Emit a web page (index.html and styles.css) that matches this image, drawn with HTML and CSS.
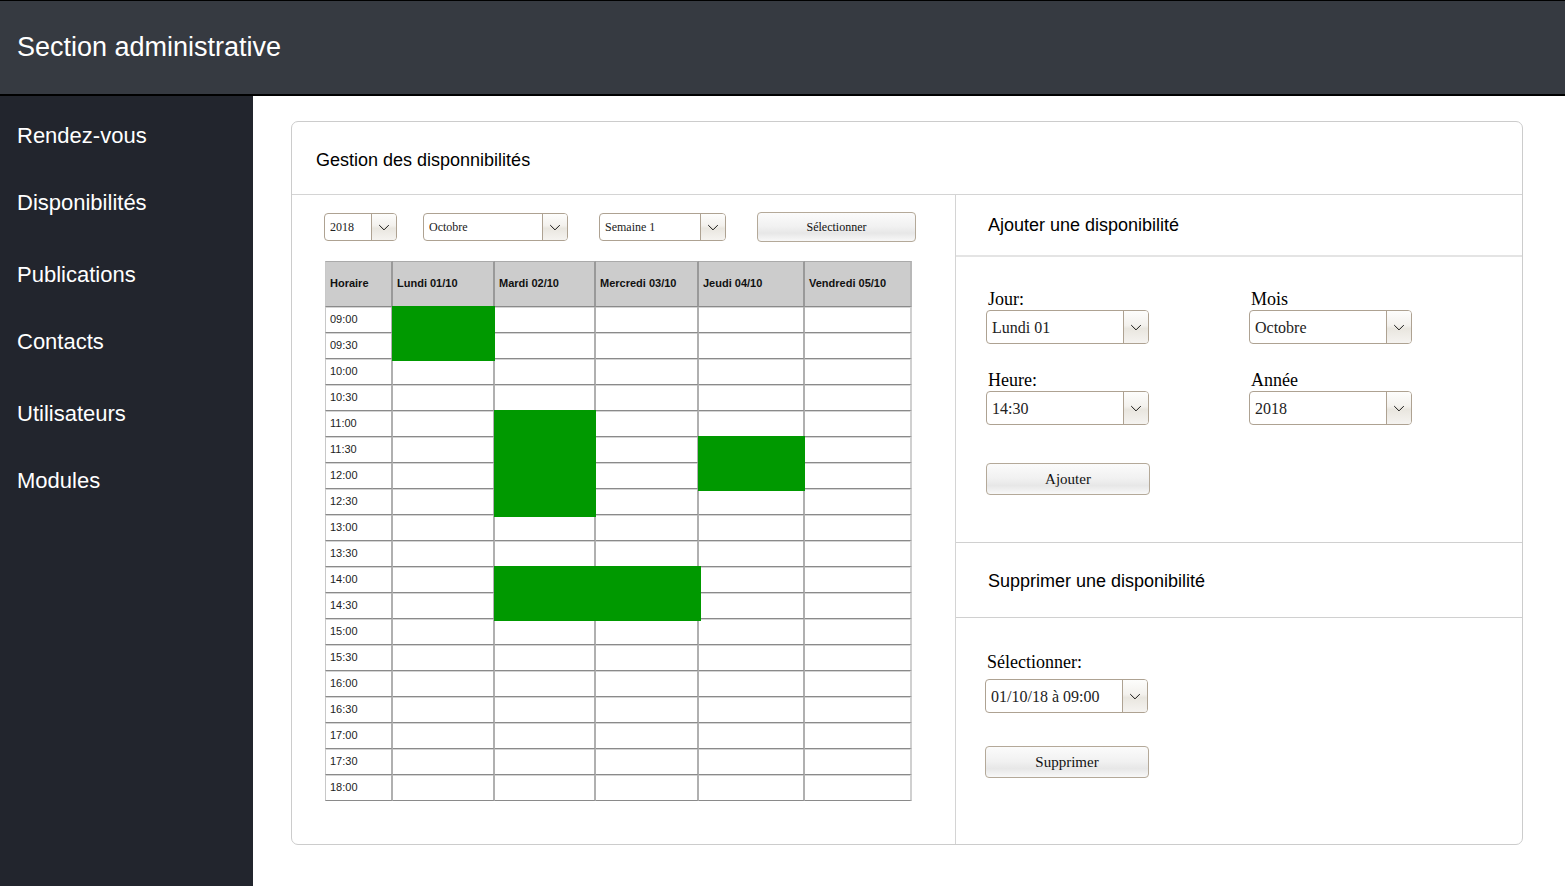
FILE: index.html
```html
<!DOCTYPE html>
<html lang="fr">
<head>
<meta charset="utf-8">
<title>Section administrative</title>
<link rel="stylesheet" href="styles.css">
</head>
<body>
<header class="topbar"><h1 class="topbar-title">Section administrative</h1></header>
<div class="shell">
  <nav class="sidebar">
    <ul class="menu">
      <li><a href="#">Rendez-vous</a></li>
      <li><a href="#">Disponibilités</a></li>
      <li><a href="#">Publications</a></li>
      <li><a href="#">Contacts</a></li>
      <li><a href="#">Utilisateurs</a></li>
      <li><a href="#">Modules</a></li>
    </ul>
  </nav>
  <main class="main">
    <section class="card">
      <h2 class="card-title">Gestion des disponnibilités</h2>
      <div class="panes">
        <div class="planner">
          <form class="toolbar">
            <span class="combo combo-year"><select aria-label="Année affichée"><option>2018</option></select><svg class="arrow" viewBox="0 0 25 26"><path d="M7.500 11l5 5 5-5"/></svg></span>
            <span class="combo combo-month"><select aria-label="Mois affiché"><option>Octobre</option></select><svg class="arrow" viewBox="0 0 25 26"><path d="M7.500 11l5 5 5-5"/></svg></span>
            <span class="combo combo-week"><select aria-label="Semaine affichée"><option>Semaine 1</option></select><svg class="arrow" viewBox="0 0 25 26"><path d="M7.500 11l5 5 5-5"/></svg></span>
            <button class="btn btn-small" type="button">Sélectionner</button>
          </form>
          <table class="schedule">
            <colgroup><col class="c-hour"><col class="c-mon"><col class="c-tue"><col class="c-wed"><col class="c-thu"><col class="c-fri"></colgroup>
            <thead>
              <tr><th scope="col">Horaire</th><th scope="col">Lundi 01/10</th><th scope="col">Mardi 02/10</th><th scope="col">Mercredi 03/10</th><th scope="col">Jeudi 04/10</th><th scope="col">Vendredi 05/10</th></tr>
            </thead>
            <tbody>
              <tr><td>09:00</td><td><span class="slot"></span></td><td></td><td></td><td></td><td></td></tr>
              <tr><td>09:30</td><td></td><td></td><td></td><td></td><td></td></tr>
              <tr><td>10:00</td><td></td><td></td><td></td><td></td><td></td></tr>
              <tr><td>10:30</td><td></td><td></td><td></td><td></td><td></td></tr>
              <tr><td>11:00</td><td></td><td><span class="slot slot-long"></span></td><td></td><td></td><td></td></tr>
              <tr><td>11:30</td><td></td><td></td><td></td><td><span class="slot"></span></td><td></td></tr>
              <tr><td>12:00</td><td></td><td></td><td></td><td></td><td></td></tr>
              <tr><td>12:30</td><td></td><td></td><td></td><td></td><td></td></tr>
              <tr><td>13:00</td><td></td><td></td><td></td><td></td><td></td></tr>
              <tr><td>13:30</td><td></td><td></td><td></td><td></td><td></td></tr>
              <tr><td>14:00</td><td></td><td><span class="slot slot-wide"></span></td><td></td><td></td><td></td></tr>
              <tr><td>14:30</td><td></td><td></td><td></td><td></td><td></td></tr>
              <tr><td>15:00</td><td></td><td></td><td></td><td></td><td></td></tr>
              <tr><td>15:30</td><td></td><td></td><td></td><td></td><td></td></tr>
              <tr><td>16:00</td><td></td><td></td><td></td><td></td><td></td></tr>
              <tr><td>16:30</td><td></td><td></td><td></td><td></td><td></td></tr>
              <tr><td>17:00</td><td></td><td></td><td></td><td></td><td></td></tr>
              <tr><td>17:30</td><td></td><td></td><td></td><td></td><td></td></tr>
              <tr><td>18:00</td><td></td><td></td><td></td><td></td><td></td></tr>
            </tbody>
          </table>
        </div>
        <div class="editor">
          <h3 class="editor-title">Ajouter une disponibilité</h3>
          <form class="form form-add">
            <div class="fields">
              <div class="field"><label for="jour">Jour:</label><span class="combo combo-large"><select id="jour"><option>Lundi 01</option></select><svg class="arrow" viewBox="0 0 25 26"><path d="M7.500 11l5 5 5-5"/></svg></span></div>
              <div class="field"><label for="mois">Mois</label><span class="combo combo-large"><select id="mois"><option>Octobre</option></select><svg class="arrow" viewBox="0 0 25 26"><path d="M7.500 11l5 5 5-5"/></svg></span></div>
              <div class="field"><label for="heure">Heure:</label><span class="combo combo-large"><select id="heure"><option>14:30</option></select><svg class="arrow" viewBox="0 0 25 26"><path d="M7.500 11l5 5 5-5"/></svg></span></div>
              <div class="field"><label for="annee">Année</label><span class="combo combo-large"><select id="annee"><option>2018</option></select><svg class="arrow" viewBox="0 0 25 26"><path d="M7.500 11l5 5 5-5"/></svg></span></div>
            </div>
            <button class="btn btn-large" type="button">Ajouter</button>
          </form>
          <h3 class="editor-title editor-title-remove">Supprimer une disponibilité</h3>
          <form class="form form-remove">
            <div class="field"><label for="creneau">Sélectionner:</label><span class="combo combo-large"><select id="creneau"><option>01/10/18 à 09:00</option></select><svg class="arrow" viewBox="0 0 25 26"><path d="M7.500 11l5 5 5-5"/></svg></span></div>
            <button class="btn btn-large" type="button">Supprimer</button>
          </form>
        </div>
      </div>
    </section>
  </main>
</div>
</body>
</html>
```
FILE: styles.css
```css
* { box-sizing: border-box; }

body {
  margin: 0;
  min-height: 100vh;
  display: flex;
  flex-direction: column;
  background: #fff;
  color: #000;
  font-family: "Liberation Sans", Arial, sans-serif;
}

h1, h2, h3 { margin: 0; font-weight: 400; }

.topbar {
  padding: 29px 17px 30px;
  border-top: 1px solid #000;
  border-bottom: 2px solid #000;
  background: #363a41;
}
.topbar-title { color: #fff; font-size: 27px; line-height: 34px; }

.shell { flex: 1; display: flex; }

.sidebar { flex: 0 0 253px; background: #22252d; }
.menu { margin: 0; padding: 28px 17px 0; list-style: none; }
.menu li { height: 67px; }
.menu li:nth-child(even) { height: 72px; }
.menu a { color: #fff; font-size: 22px; line-height: 24px; text-decoration: none; }

.main { flex: 1; display: flex; padding: 25px 42px 41px 38px; }

.card {
  flex: 1;
  display: flex;
  flex-direction: column;
  border: 1px solid #ccc;
  border-radius: 7px;
}
.card-title {
  padding: 28px 24px 24px;
  border-bottom: 1px solid #d4d4d4;
  font-size: 18px;
  line-height: 20px;
}
.panes { flex: 1; display: grid; grid-template-columns: 663fr 567fr; }

.planner { padding: 17px 39px 43px 32px; }
.toolbar { display: grid; grid-template-columns: 99fr 176fr 158fr 159fr; align-items: center; }

.combo {
  display: grid;
  grid-template-columns: 1fr 25px;
  height: 28px;
  border: 1px solid #aea292;
  border-radius: 4px;
  overflow: hidden;
  background: #fff;
}
.combo select {
  grid-area: 1 / 1 / 2 / 3;
  appearance: none;
  width: 100%;
  height: 100%;
  margin: 0;
  padding: 0 25px 0 5px;
  border: 0;
  background: transparent;
  color: #222;
  font-family: "Liberation Serif", "Times New Roman", serif;
  font-size: 12px;
}
.arrow {
  grid-area: 1 / 2;
  width: 25px;
  height: 100%;
  border-left: 1px solid #aea292;
  background: linear-gradient(#fdfdfc, #f3f1ed 45%, #e9e6df 55%, #f5f3f0);
  pointer-events: none;
}
.arrow path { fill: none; stroke: #111; stroke-width: 1; }
.combo-year { width: 73px; }
.combo-month { width: 145px; }
.combo-week { width: 127px; }
.combo-large { width: 163px; height: 34px; }
.combo-large select { font-size: 16px; }

.btn {
  padding: 0;
  border: 1px solid #b4a999;
  border-radius: 4px;
  background: linear-gradient(#fbfbfb, #f1f1f1 48%, #e7e7e7 72%, #f8f8f8);
  color: #111;
  font-family: "Liberation Serif", "Times New Roman", serif;
}
.btn-small { height: 30px; font-size: 12px; }
.btn-large { width: 164px; height: 32px; font-size: 15px; }

.schedule {
  width: calc(100% - 5px);
  margin: 19px 4px 0 1px;
  border-spacing: 0;
  table-layout: fixed;
  font-size: 11px;
}
.c-hour { width: 68px; }
.c-mon { width: 102px; }
.c-tue { width: 101px; }
.c-wed { width: 103px; }
.c-thu { width: 106px; }
.c-fri { width: 107px; }
.schedule th,
.schedule td {
  position: relative;
  height: 26px;
  padding: 0 0 2px 4px;
  border-right: 2px solid #b0b0b0;
  border-bottom: 1px solid #8a8a8a;
  text-align: left;
  white-space: nowrap;
}
.schedule td { box-shadow: inset 0 1px 0 #d4d4d4; color: #222; }
.schedule th {
  height: 46px;
  border-top: 1px solid #aaa;
  border-right-color: #999;
  background: #ccc;
  color: #111;
}
.schedule th:first-child,
.schedule td:first-child { border-left: 1px solid #c8c8c8; }
.schedule th:last-child { border-right-color: #b8b8b8; }
.schedule td:last-child { border-right-color: #d0d0d0; }

/* A booked range starts in its first cell and covers the grid lines around it. */
.slot {
  position: absolute;
  z-index: 1;
  top: -1px;
  left: -1px;
  right: -2px;
  height: 55px;
  background: #090;
}
.slot-long { height: 107px; }
.slot-wide { right: auto; width: calc(200% + 9px); }

.editor { border-left: 1px solid #d4d4d4; }
.editor-title {
  padding: 20px 32px;
  border-bottom: 2px solid #e4e4e4;
  font-size: 18px;
  line-height: 20px;
}
.editor-title-remove {
  padding: 28px 32px 26px;
  border-top: 1px solid #d0d0d0;
  border-bottom: 1px solid #d0d0d0;
}

.form {
  font-family: "Liberation Serif", "Times New Roman", serif;
  font-size: 18px;
  line-height: 22px;
}
.form-add { padding: 31px 10px 47px 30px; }
.form-remove { padding: 33px 10px 47px 29px; }
.fields { display: grid; grid-template-columns: 1fr 1fr; row-gap: 25px; }
.field label { display: block; padding-left: 2px; }
.form-add .btn { display: block; margin-top: 38px; }
.form-remove label { margin-bottom: 6px; }
.form-remove .btn { display: block; margin-top: 33px; }
```
